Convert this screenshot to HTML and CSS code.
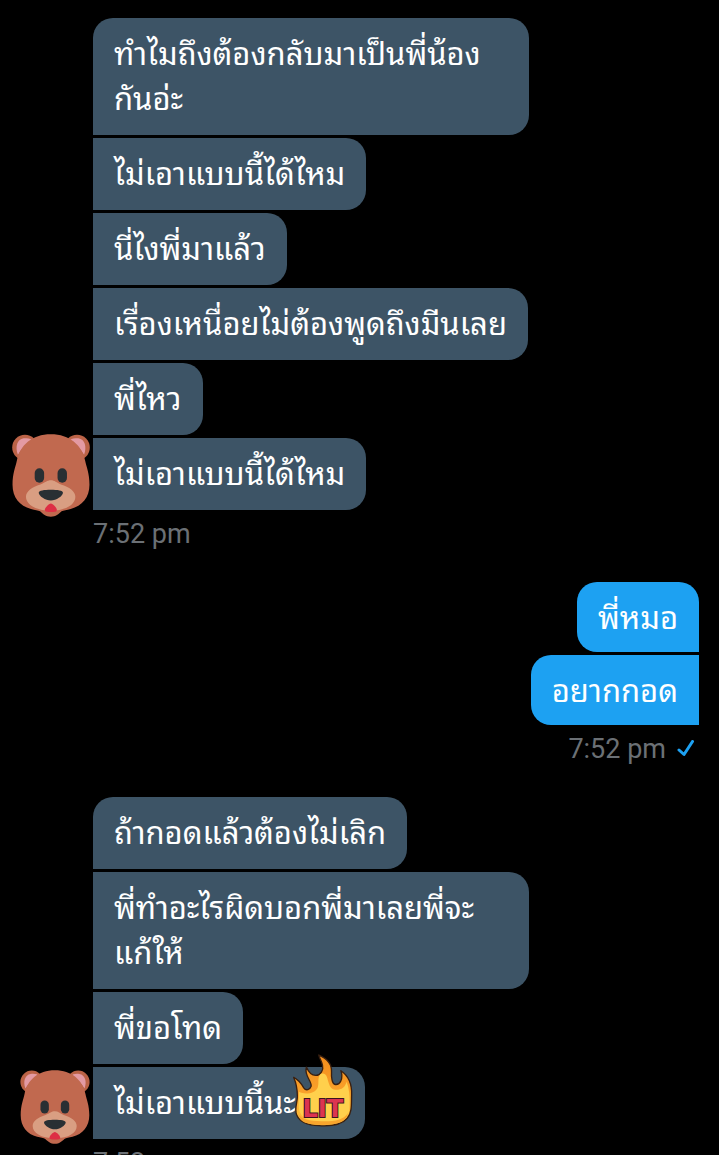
FILE: index.html
```
<!DOCTYPE html>
<html lang="th">
<head>
<meta charset="utf-8">
<meta name="viewport" content="width=device-width,initial-scale=1.0">
<title>Messages</title>
<link rel="stylesheet" href="styles.css">
</head>
<body>

<svg class="defs" aria-hidden="true">
	<symbol id="bear" viewBox="36 44 231 247">
		<circle cx="74" cy="84" r="38" fill="#bb6347"/>
		<circle cx="229" cy="84" r="38" fill="#bb6347"/>
		<path d="M53 106C44 82 51 60 70 57c14-2 24 1 26 7C77 74 63 88 53 106z" fill="#e39aa3"/>
		<path d="M250 106c9-24 2-46-17-49-14-2-24 1-26 7 19 10 33 24 43 42z" fill="#e39aa3"/>
		<path d="M151 45c56 0 92 32 102 78 4 20 13 38 13 72 0 38-22 63-56 72-12 3-21 4-27 7-9 8-17 16-32 16s-23-8-32-16c-6-3-15-4-27-7-34-9-55-34-55-72 0-34 9-52 13-72C60 77 95 45 151 45z" fill="#c1694f"/>
		<path d="M151 182c11 0 17 7 30 12 25 8 43 20 43 37 0 22-25 41-73 41s-74-19-74-41c0-17 18-29 43-37 14-5 20-12 31-12z" fill="#d99e82"/>
		<rect x="103" y="146" width="28" height="43" rx="14" fill="#292f33"/>
		<rect x="171" y="146" width="28" height="43" rx="14" fill="#292f33"/>
		<path d="M151 210c20 0 36 2 36 9 0 10-20 23-36 23s-36-13-36-23c0-7 16-9 36-9z" fill="#292f33"/>
		<path d="M151 251c6 0 18 13 18 19 0 5-8 6-18 6s-18-1-18-6c0-6 12-19 18-19z" fill="#dd2e44"/>
	</symbol>
</svg>

<main class="chat">
	<section class="group received">
		<svg class="avatar avatar-large" role="img" aria-label="หมี"><use href="#bear"/></svg>
		<div class="bubbles">
			<p class="bubble">ทำไมถึงต้องกลับมาเป็นพี่น้อง<wbr><span class="word">กันอ่ะ</span></p>
			<p class="bubble">ไม่เอาแบบนี้ได้ไหม</p>
			<p class="bubble">นี่ไงพี่มาแล้ว</p>
			<p class="bubble">เรื่องเหนื่อยไม่ต้องพูดถึงมีนเลย</p>
			<p class="bubble">พี่ไหว</p>
			<p class="bubble">ไม่เอาแบบนี้ได้ไหม</p>
		</div>
		<time class="time">7:52 pm</time>
	</section>

	<section class="group sent">
		<div class="bubbles">
			<p class="bubble">พี่หมอ</p>
			<p class="bubble">อยากกอด</p>
		</div>
		<time class="time">7:52 pm
			<svg class="check" viewBox="0 0 18 18" role="img" aria-label="Sent"><path d="M2 10l5 4.500L15.500 1.500" fill="none" stroke="#1da1f2" stroke-width="3" stroke-linecap="round" stroke-linejoin="round"/></svg>
		</time>
	</section>

	<section class="group received">
		<svg class="avatar" role="img" aria-label="หมี"><use href="#bear"/></svg>
		<div class="bubbles">
			<p class="bubble">ถ้ากอดแล้วต้องไม่เลิก</p>
			<p class="bubble">พี่ทำอะไรผิดบอกพี่มาเลยพี่จะ<wbr><span class="word">แก้ให้</span></p>
			<p class="bubble">พี่ขอโทด</p>
			<p class="bubble has-sticker">ไม่เอาแบบนี้นะ
				<svg class="sticker" viewBox="66 36 182 224">
					<defs>
						<linearGradient id="fire" x1="0" y1="0" x2="0" y2="1">
							<stop offset="0" stop-color="#f28c1c"/>
							<stop offset=".5" stop-color="#f9a02a"/>
							<stop offset="1" stop-color="#ffc53d"/>
						</linearGradient>
					</defs>
					<path d="M146 42c24 10 39 28 38 50-1 14 1 37 11 38 14 2 25-16 17-41 24 16 33 44 32 72-1 26 2 53-13 70-18 21-52 24-84 22-31-1-57-8-67-32-8-18 2-36 2-55 0-20-2-37-11-57 15 7 24 21 30 31 7 10 18 6 22-5 3-15-22-31-14-57 6 15 17 25 28 25 14 0 24-16 20-31-2-12-10-21-11-30z" fill="url(#fire)" stroke="#3a2010" stroke-width="4" stroke-linejoin="round"/>
					<path d="M87 152c16 9 49 6 56-14 4-12-1-26 6-36 7-8 18-5 22 8 5 17 8 36 26 36 19 0 27-8 32-24 8 22 9 41 9 57-1 24 1 34-9 47-13 14-41 18-72 16-31-1-57-7-66-26-8-14-4-40-4-64z" fill="#ffd04c"/>
					<path d="M85 217c10 20 34 22 69 23 36 1 65-3 79-25-3 24-26 36-76 36-47 0-70-8-72-34z" fill="#f8a52d"/>
					<text class="lit" x="158" y="228" text-anchor="middle">LIT</text>
				</svg>
			</p>
		</div>
		<time class="time">7:52 pm</time>
	</section>
</main>

</body>
</html>
```

FILE: styles.css
```
*{
	box-sizing:border-box;
}
body{
	margin:0;
	background:#000;
	color:#fff;
	font-family:Roboto, "Noto Sans Thai Looped", "Noto Looped Thai", Loma, Waree, "Noto Sans Thai", "Noto Sans", sans-serif;
}
.defs{
	position:absolute;
	width:0;
	height:0;
}
.chat{
	height:100vh;
	overflow:hidden;
	padding:18px 20px 0 0;
}
.group{
	display:grid;
	grid-template-columns:93px 1fr;
	margin-bottom:24px;
}
.bubbles{
	grid-column:2;
	display:flex;
	flex-direction:column;
	align-items:flex-start;
	gap:3px;
}
.bubble{
	max-width:72%;
	margin:0;
	padding:14px 21px 13px;
	border-radius:0 20px 20px 0;
	background:#3d5466;
	font-size:31px;
	line-height:45px;
}
.word{
	display:inline-block;
	white-space:nowrap;
}
.received .bubble:first-child{
	border-top-left-radius:20px;
}
.sent .bubbles{
	align-items:flex-end;
}
.sent .bubble{
	padding:14px 21px 11px;
	border-radius:20px 0 0 20px;
	background:#1da1f2;
}
.sent .bubble:first-child{
	border-top-right-radius:20px;
}
.avatar{
	grid-column:1;
	grid-row:1;
	align-self:end;
	justify-self:end;
	width:70px;
	height:74px;
	margin:0 3px -5px 0;
}
.avatar-large{
	width:78px;
	height:83px;
	margin-bottom:-7px;
}
.time{
	grid-column:2;
	color:#6b7075;
	font-size:27px;
	line-height:48px;
}
.sent .time{
	display:flex;
	align-items:center;
	justify-content:flex-end;
	gap:11px;
	padding-right:4px;
}
.check{
	width:18px;
	height:18px;
}
/* leaves room for the flame after the text */
.has-sticker{
	position:relative;
	padding-right:69px;
}
.sticker{
	position:absolute;
	top:-14px;
	right:12px;
	width:61px;
	height:75px;
}
.lit{
	fill:#dc3450;
	stroke:#3a1420;
	stroke-width:6px;
	paint-order:stroke;
	font:bold 72px "DejaVu Sans", sans-serif;
}
```
